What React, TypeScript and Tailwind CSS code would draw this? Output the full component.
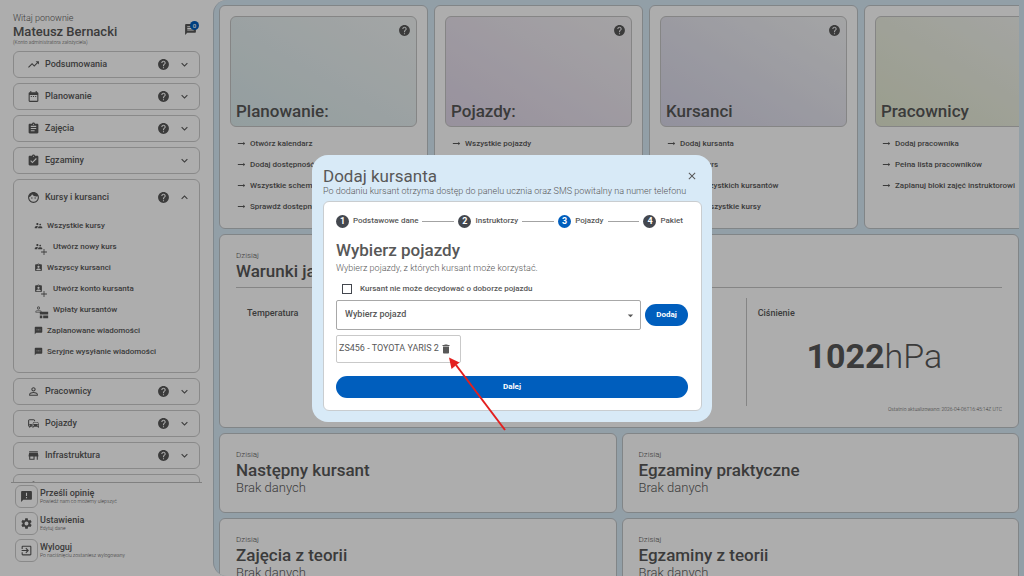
import { useState } from 'react';
import type { ReactNode } from 'react';
import type { IconType } from 'react-icons';
import {
	MdAnnouncement,
	MdArrowDropDown,
	MdArrowRightAlt,
	MdAssignment,
	MdAssignmentInd,
	MdAssignmentTurnedIn,
	MdClose,
	MdDateRange,
	MdDelete,
	MdExitToApp,
	MdExpandLess,
	MdExpandMore,
	MdFace,
	MdHelp,
	MdMessage,
	MdOutlineAdd,
	MdOutlineCommute,
	MdPersonOutline,
	MdSettings,
	MdStore,
	MdSupervisorAccount,
	MdTextsms,
	MdTrendingUp,
	MdViewComfy,
} from 'react-icons/md';

type SubItem = { label: string; icon: IconType; extra?: IconType };
type MenuItem = {
	label: string;
	icon: IconType;
	help: boolean;
	children?: SubItem[];
};

const menu: MenuItem[] = [
	{ label: 'Podsumowania', icon: MdTrendingUp, help: true },
	{ label: 'Planowanie', icon: MdDateRange, help: true },
	{ label: 'Zajęcia', icon: MdAssignment, help: true },
	{ label: 'Egzaminy', icon: MdAssignmentTurnedIn, help: false },
	{
		label: 'Kursy i kursanci',
		icon: MdFace,
		help: true,
		children: [
			{ label: 'Wszystkie kursy', icon: MdSupervisorAccount },
			{ label: 'Utwórz nowy kurs', icon: MdSupervisorAccount, extra: MdOutlineAdd },
			{ label: 'Wszyscy kursanci', icon: MdAssignmentInd },
			{ label: 'Utwórz konto kursanta', icon: MdAssignmentInd, extra: MdOutlineAdd },
			{ label: 'Wpłaty kursantów', icon: MdPersonOutline, extra: MdViewComfy },
			{ label: 'Zaplanowane wiadomości', icon: MdTextsms },
			{ label: 'Seryjne wysyłanie wiadomości', icon: MdTextsms },
		],
	},
	{ label: 'Pracownicy', icon: MdPersonOutline, help: true },
	{ label: 'Pojazdy', icon: MdOutlineCommute, help: true },
	{ label: 'Infrastruktura', icon: MdStore, help: true },
	{ label: 'Finanse', icon: MdAssignment, help: true },
];

const footer = [
	{ label: 'Prześli opinię', hint: 'Powiedź nam co możemy ulepszyć', icon: MdAnnouncement },
	{ label: 'Ustawienia', hint: 'Edytuj dane', icon: MdSettings },
	{ label: 'Wyloguj', hint: 'Po naciśnięciu zostaniesz wylogowany', icon: MdExitToApp },
];

const shortcuts = [
	{
		title: 'Planowanie:',
		help: true,
		tint: 'from-[#d9e9eb] to-[#f1f4f4]',
		links: ['Otwórz kalendarz', 'Dodaj dostępność', 'Wszystkie schematy', 'Sprawdź dostępność'],
	},
	{
		title: 'Pojazdy:',
		help: true,
		tint: 'from-[#e0d6e8] to-[#f3f1f3]',
		links: ['Wszystkie pojazdy'],
	},
	{
		title: 'Kursanci',
		help: true,
		tint: 'from-[#d8d6e8] to-[#f2f3f4]',
		links: ['Dodaj kursanta', 'Dodaj kurs', 'Lista wszystkich kursantów', 'Pokaż wszystkie kursy'],
	},
	{
		title: 'Pracownicy',
		help: false,
		tint: 'from-[#e3e8d0] to-[#f3f4f2]',
		links: ['Dodaj pracownika', 'Pełna lista pracowników', 'Zaplanuj bloki zajęć instruktorowi'],
	},
];

const days = ['Następny kursant', 'Egzaminy praktyczne', 'Zajęcia z teorii', 'Egzaminy z teorii'];

const steps = ['Podstawowe dane', 'Instruktorzy', 'Pojazdy', 'Pakiet'];

const MenuGroup = ({ item }: { item: MenuItem }) => {
	const [open, setOpen] = useState(Boolean(item.children));
	const Icon = item.icon;
	const Chevron = open ? MdExpandLess : MdExpandMore;

	return (
		<div className="shrink-0 rounded-md border border-[#cbcbcb]">
			<button
				type="button"
				aria-expanded={open}
				onClick={() => setOpen(!open)}
				className={`flex w-full items-center pr-2 pl-[13px] text-left text-[9px] font-medium ${open ? 'h-[34px]' : 'h-[25px]'}`}
			>
				<Icon className="size-[13px]" />
				<span className="ml-[5px] flex-1">{item.label}</span>
				{item.help && <MdHelp className="size-[13px]" />}
				<Chevron className="ml-2 size-[13px]" />
			</button>
			{open && item.children && (
				<ul className="pt-[1px] pb-[10px] pl-5">
					{item.children.map((sub) => (
						<li key={sub.label}>
							<a href="#" className="flex h-[21px] items-center text-[8px] font-medium">
								<span className="relative">
									<sub.icon className="size-[9px]" />
									{sub.extra && <sub.extra className="absolute top-[5px] left-[5px] size-[10px]" />}
								</span>
								<span className={sub.extra ? 'ml-[10px]' : 'ml-1'}>{sub.label}</span>
							</a>
						</li>
					))}
				</ul>
			)}
		</div>
	);
};

const Sidebar = () => (
	<aside className="flex w-[213px] shrink-0 flex-col px-[11px] pt-[13px] pb-[14px]">
		<header className="flex items-start justify-between px-[2px]">
			<div>
				<p className="text-[9px] leading-[11px] font-light">Witaj ponownie</p>
				<h1 className="text-[13px] leading-[15px] font-medium">Mateusz Bernacki</h1>
				<p className="text-[5px] leading-[7px] font-light">(Konto administratora założyciela)</p>
			</div>
			<button type="button" aria-label="Wiadomości" className="relative mt-[10px] mr-[3px]">
				<MdMessage className="size-[13px]" />
				<span className="absolute -top-[2px] -right-[2px] flex size-[9px] items-center justify-center rounded-full bg-[#005ebd] text-[6px] font-medium text-white">
					0
				</span>
			</button>
		</header>
		<nav className="mt-[5px] flex min-h-0 flex-1 flex-col gap-[5px] overflow-hidden border-b border-[#bdbdbd] px-[2px]">
			{menu.map((item) => (
				<MenuGroup key={item.label} item={item} />
			))}
		</nav>
		<div className="mt-[2px] flex flex-col gap-1 pl-1">
			{footer.map(({ label, hint, icon: Icon }) => (
				<button key={label} type="button" className="flex items-center gap-[2px] text-left">
					<span className="flex size-[23px] items-center justify-center rounded-md border border-[#cbcbcb]">
						<Icon className="size-[13px]" />
					</span>
					<span>
						<span className="block text-[9px] leading-[10px] font-medium">{label}</span>
						<span className="block text-[5px] leading-[7px] font-light">{hint}</span>
					</span>
				</button>
			))}
		</div>
	</aside>
);

const Card = ({ className = '', children }: { className?: string; children: ReactNode }) => (
	<section className={`rounded-md border border-[#bfc4c8] bg-white ${className}`}>{children}</section>
);

const Dashboard = () => (
	<main className="flex min-w-0 flex-1 flex-col gap-[5px] overflow-hidden rounded-l-[14px] border-l border-[#bfcad2] bg-[#d8eaf7] p-[5px]">
		<div className="flex shrink-0 gap-[6px] overflow-hidden">
			{shortcuts.map((group) => (
				<Card key={group.title} className="h-[224px] w-[209px] shrink-0 p-[10px]">
					<div
						className={`flex h-[111px] flex-col items-end justify-between rounded-md border border-[#c4c4c4] bg-linear-to-tr px-[5px] pt-[7px] pb-[4px] ${group.tint}`}
					>
						{group.help ? <MdHelp className="size-[13px]" /> : <span />}
						<h2 className="w-full text-[17px] leading-[22px] font-medium">{group.title}</h2>
					</div>
					<ul className="mt-[6px] pl-[6px]">
						{group.links.map((link) => (
							<li key={link}>
								<a href="#" className="flex h-[21px] items-center gap-[3px] text-[8px] font-medium whitespace-nowrap">
									<MdArrowRightAlt className="size-[11px]" />
									{link}
								</a>
							</li>
						))}
					</ul>
				</Card>
			))}
		</div>

		<Card className="flex h-[194px] shrink-0 flex-col px-4 pt-4 pb-[15px]">
			<p className="text-[8px] leading-[10px] font-light">Dzisiaj</p>
			<h2 className="border-b border-[#c4c4c4] pb-[6px] text-[17px] leading-5 font-medium">Warunki jazdy</h2>
			<div className="mt-[10px] grid flex-1 grid-cols-3 divide-x divide-[#c4c4c4] text-[9px] font-medium">
				<div className="px-[11px] pt-[11px]">Temperatura</div>
				<div className="px-[11px] pt-[11px]" />
				<div className="px-[11px] pt-[11px]">
					Ciśnienie
					<p className="mt-4 text-center text-[34px] leading-[44px] font-light">
						<strong className="font-bold">1022</strong>hPa
					</p>
				</div>
			</div>
			<p className="text-right text-[5px] leading-[6px] font-light">
				Ostatnio aktualizowano: 2026-04-06T16:45:14Z UTC
			</p>
		</Card>

		<div className="grid shrink-0 grid-cols-2 gap-[5px]">
			{days.map((title) => (
				<Card key={title} className="h-[80px] px-4 pt-4">
					<p className="text-[8px] leading-[10px] font-light">Dzisiaj</p>
					<h2 className="text-[17px] leading-5 font-medium">{title}</h2>
					<p className="text-[13px] leading-4 font-light">Brak danych</p>
				</Card>
			))}
		</div>
	</main>
);

const Stepper = ({ current }: { current: number }) => (
	<ol className="flex items-center gap-1 pr-[5px] text-[8px] font-medium">
		{steps.map((label, i) => (
			<li key={label} className={`flex items-center gap-1 ${i > 0 ? 'flex-auto' : ''}`}>
				{i > 0 && <span className="h-px flex-1 bg-[#a3a3a3]" />}
				<span
					className={`flex size-[13px] items-center justify-center rounded-full text-[9px] font-bold text-white ${i + 1 === current ? 'bg-[#005ebd]' : 'bg-[#43474e]'}`}
				>
					{i + 1}
				</span>
				<span>{label}</span>
			</li>
		))}
	</ol>
);

const AddStudentDialog = () => (
	<div
		role="dialog"
		aria-labelledby="dialog-title"
		className="relative w-[400px] rounded-2xl bg-[#d8eaf7] pt-[11px] pr-[10px] pb-[11px] pl-[11px]"
	>
		<header className="flex items-start justify-between">
			<div className="whitespace-nowrap">
				<h2 id="dialog-title" className="text-[17px] leading-5">
					Dodaj kursanta
				</h2>
				<p className="text-[9px] leading-[10px] font-light">
					Po dodaniu kursant otrzyma dostęp do panelu ucznia oraz SMS powitalny na numer telefonu
				</p>
			</div>
			<button type="button" aria-label="Zamknij" className="mt-1 mr-[6px]">
				<MdClose className="size-3" />
			</button>
		</header>

		<form
			className="mt-[5px] rounded-md border border-[#c9cdd0] bg-white pt-[13px] pr-[13px] pb-3 pl-3"
			onSubmit={(e) => e.preventDefault()}
		>
			<Stepper current={3} />
			<h3 className="mt-[11px] text-[17px] leading-[22px] font-medium">Wybierz pojazdy</h3>
			<p className="mt-[1px] text-[9px] leading-3 font-light">Wybierz pojazdy, z których kursant może korzystać.</p>
			<label className="mt-2 ml-[6px] flex items-center gap-2 text-[8px] leading-[14px] font-medium">
				<input type="checkbox" className="size-[10px] appearance-none border border-[#43474e] checked:bg-[#005ebd]" />
				Kursant nie może decydować o doborze pojazdu
			</label>
			<div className="mt-1 flex items-center gap-1">
				<div className="relative flex-1">
					<select
						aria-label="Wybierz pojazd"
						className="block h-[30px] w-full appearance-none rounded-xs border border-[#a8a8a8] bg-white px-2 text-[9px] font-medium"
					>
						<option>Wybierz pojazd</option>
						<option>ZS456 - TOYOTA YARIS 2</option>
					</select>
					<MdArrowDropDown className="pointer-events-none absolute top-[9px] right-1 size-[13px]" />
				</div>
				<button type="button" className="h-[22px] w-[43px] rounded-full bg-[#005ebd] text-[8px] font-bold text-white">
					Dodaj
				</button>
			</div>
			<div className="mt-[5px] flex h-7 w-[125px] items-center justify-between rounded-xs border border-[#c9c9c9] pr-2 pl-[2px] text-[9px] whitespace-nowrap">
				ZS456 - TOYOTA YARIS 2
				<button type="button" aria-label="Usuń pojazd">
					<MdDelete className="size-3" />
				</button>
			</div>
			<button type="submit" className="mt-[13px] h-[22px] w-full rounded-full bg-[#005ebd] text-[8px] font-bold text-white">
				Dalej
			</button>
		</form>

		{/* pointer to the delete button */}
		<svg className="pointer-events-none absolute top-[201px] left-[136px]" width="60" height="78" viewBox="0 0 60 78">
			<path d="M57 74 8 9" stroke="#e3201f" strokeWidth="2" />
			<path d="M1 1.5 11.5 6.5 3.5 13Z" fill="#e3201f" />
		</svg>
	</div>
);

const App = () => (
	<div className="flex h-screen overflow-hidden bg-white font-[Roboto,sans-serif] leading-none text-[#585858]">
		<Sidebar />
		<Dashboard />
		<div className="fixed inset-0 z-10 flex items-center justify-center bg-black/32">
			<AddStudentDialog />
		</div>
	</div>
);

export default App;
